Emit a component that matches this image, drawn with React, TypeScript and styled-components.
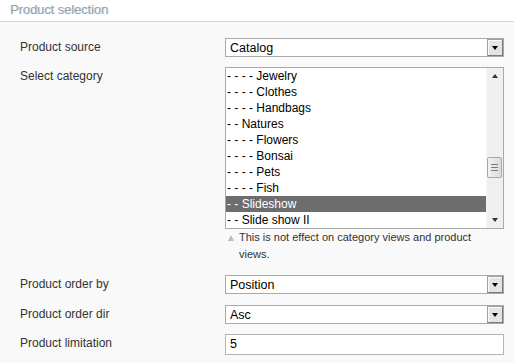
import React from "react";
import styled, { createGlobalStyle } from "styled-components";

const Global = createGlobalStyle`
  html, body { margin: 0; padding: 0; background: #f9f9f9; }
  body { font-family: "Liberation Sans", Arial, sans-serif; width: 514px; height: 363px; overflow: hidden; }
`;

const Panel = styled.div`
  width: 514px;
  height: 363px;
  background: #f9f9f9;
  display: flex;
  flex-direction: column;
`;

const Header = styled.div`
  background: #ffffff;
  border-bottom: 1px solid #d4d4d4;
  box-sizing: border-box;
  height: 22px;
  padding: 3px 0 0 10px;
  font-size: 13px;
  line-height: 14px;
  color: #90a2b4;
  text-shadow: 1px 0 0 rgba(190, 202, 214, 0.6);
  letter-spacing: -0.1px;
`;

const Form = styled.div`
  display: flex;
  flex-direction: column;
  padding: 16px 0 0 20px;
`;

const Row = styled.div<{ $gap: number }>`
  display: flex;
  align-items: flex-start;
  margin-bottom: ${(p) => p.$gap}px;
`;

const Label = styled.div`
  width: 205px;
  font-size: 12px;
  line-height: 14px;
  padding-top: 2px;
  color: #333333;
`;

const Control = styled.div`
  width: 279px;
  display: flex;
  flex-direction: column;
`;

const SelectBox = styled.div`
  box-sizing: border-box;
  width: 279px;
  height: 19px;
  border: 1px solid #a9a9a9;
  background: #ffffff;
  display: flex;
  align-items: center;
  justify-content: space-between;
  font-size: 12.5px;
  color: #000;
  padding-left: 4px;
`;

const DropButton = styled.div`
  box-sizing: border-box;
  width: 16px;
  height: 17px;
  background: #e4e4e4;
  border: 1px solid #7a7a7a;
  border-top-color: #a0a0a0;
  border-left-color: #a0a0a0;
  box-shadow: inset 1px 1px 0 #fafafa;
  display: flex;
  align-items: center;
  justify-content: center;
`;

const Arrow = styled.span<{ $up?: boolean; $color?: string }>`
  width: 0;
  height: 0;
  border-left: 3.5px solid transparent;
  border-right: 3.5px solid transparent;
  ${(p) =>
    p.$up
      ? `border-bottom: 4px solid ${p.$color || "#000"};`
      : `border-top: 4px solid ${p.$color || "#000"};`}
`;

const ListBox = styled.div`
  box-sizing: border-box;
  width: 279px;
  height: 162px;
  border: 1px solid #a9a9a9;
  background: #ffffff;
  display: flex;
`;

const Options = styled.div`
  flex: 1;
  display: flex;
  flex-direction: column;
`;

const Option = styled.div<{ $selected?: boolean }>`
  height: 16px;
  line-height: 16px;
  font-size: 12px;
  padding-left: 1px;
  white-space: pre;
  color: ${(p) => (p.$selected ? "#ffffff" : "#000")};
  background: ${(p) => (p.$selected ? "#6d6d6d" : "transparent")};
`;

const Scrollbar = styled.div`
  width: 16px;
  background: #efefef;
  border-left: 1px solid #f6f6f6;
  display: flex;
  flex-direction: column;
  align-items: center;
`;

const ScrollArrow = styled.div`
  height: 16px;
  width: 16px;
  display: flex;
  align-items: center;
  justify-content: center;
`;

const Track = styled.div`
  flex: 1;
  width: 16px;
`;

const Thumb = styled.div`
  box-sizing: border-box;
  width: 15px;
  height: 21px;
  border: 1px solid #a8a8a8;
  border-radius: 2px;
  background: linear-gradient(to right, #f2f2f2, #dcdcdc);
  display: flex;
  flex-direction: column;
  align-items: center;
  justify-content: center;
  gap: 2px;
`;

const Grip = styled.span`
  width: 7px;
  height: 1px;
  background: #7a7a7a;
`;

const Hint = styled.div`
  display: flex;
  align-items: flex-start;
  margin-top: 0px;
  font-size: 11px;
  line-height: 17px;
  color: #333;
`;

const HintIcon = styled.span`
  flex: 0 0 auto;
  width: 0;
  height: 0;
  margin: 6px 5px 0 3px;
  border-left: 3.5px solid transparent;
  border-right: 3.5px solid transparent;
  border-bottom: 6px solid #b4bcc4;
`;

const TextInput = styled.div`
  box-sizing: border-box;
  width: 279px;
  height: 21px;
  border: 1px solid #b4b4b4;
  background: #fff;
  font-size: 12.5px;
  line-height: 19px;
  padding-left: 4px;
  color: #000;
`;

const categories = [
  "- - - - Jewelry",
  "- - - - Clothes",
  "- - - - Handbags",
  "- - Natures",
  "- - - - Flowers",
  "- - - - Bonsai",
  "- - - - Pets",
  "- - - - Fish",
  "- - Slideshow",
  "- - Slide show II",
];

const Select = ({ value }: { value: string }) => (
  <SelectBox>
    <span>{value}</span>
    <DropButton>
      <Arrow />
    </DropButton>
  </SelectBox>
);

export default function App() {
  const thumbTop = 73;
  return (
    <>
      <Global />
      <Panel>
        <Header>Product selection</Header>
        <Form>
          <Row $gap={10}>
            <Label>Product source</Label>
            <Control>
              <Select value="Catalog" />
            </Control>
          </Row>
          <Row $gap={12}>
            <Label>Select category</Label>
            <Control>
              <ListBox>
                <Options>
                  {categories.map((c) => (
                    <Option key={c} $selected={c === "- - Slideshow"}>
                      {c}
                    </Option>
                  ))}
                </Options>
                <Scrollbar>
                  <ScrollArrow>
                    <Arrow $up $color="#333" />
                  </ScrollArrow>
                  <Track>
                    <Thumb style={{ marginTop: thumbTop }}>
                      <Grip />
                      <Grip />
                      <Grip />
                    </Thumb>
                  </Track>
                  <ScrollArrow>
                    <Arrow $color="#333" />
                  </ScrollArrow>
                </Scrollbar>
              </ListBox>
              <Hint>
                <HintIcon />
                <span>This is not effect on category views and product views.</span>
              </Hint>
            </Control>
          </Row>
          <Row $gap={11}>
            <Label>Product order by</Label>
            <Control>
              <Select value="Position" />
            </Control>
          </Row>
          <Row $gap={10}>
            <Label>Product order dir</Label>
            <Control>
              <Select value="Asc" />
            </Control>
          </Row>
          <Row $gap={0}>
            <Label>Product limitation</Label>
            <Control>
              <TextInput>5</TextInput>
            </Control>
          </Row>
        </Form>
      </Panel>
    </>
  );
}
